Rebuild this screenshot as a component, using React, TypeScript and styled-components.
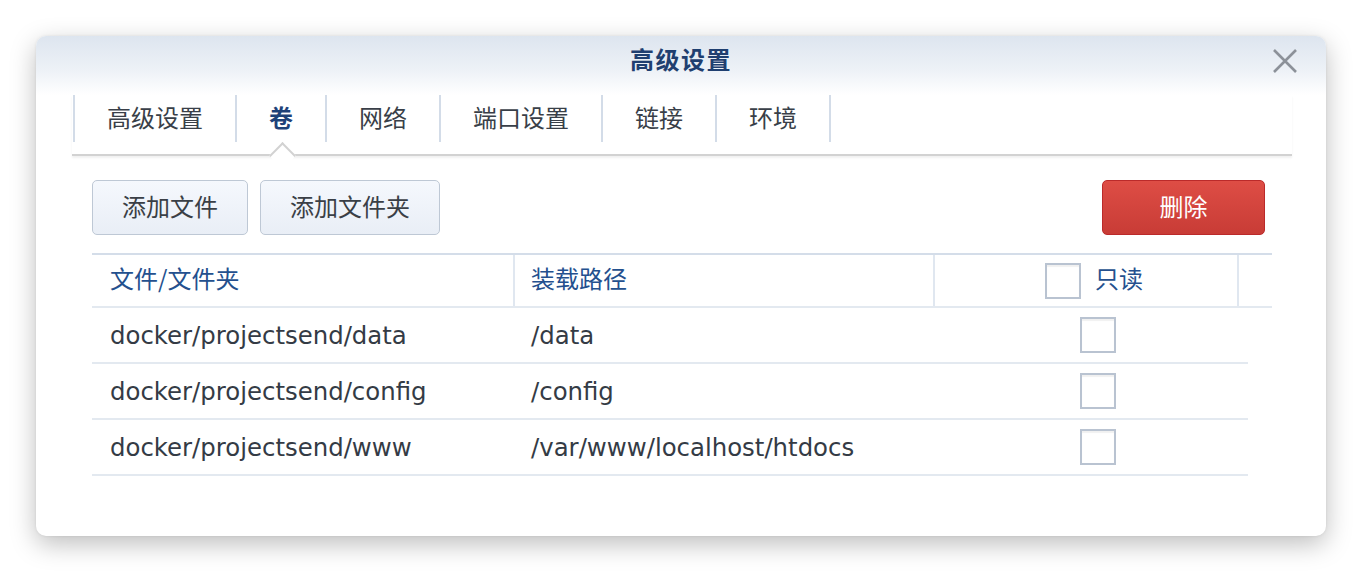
import React from "react";
import styled, { createGlobalStyle } from "styled-components";

const Global = createGlobalStyle`
  html, body { margin: 0; padding: 0; background: #ffffff; }
  body { font-family: "DejaVu Sans", "Noto Sans CJK SC", sans-serif; }
  * { box-sizing: border-box; }
`;

const CJK = `"Noto Sans CJK SC", "Noto Sans", sans-serif`;
const LATIN = `"DejaVu Sans", "Noto Sans CJK SC", sans-serif`;

const Page = styled.div`
  padding: 36px;
  width: 1362px;
  height: 572px;
`;

const Window = styled.div`
  width: 1290px;
  height: 500px;
  background: #ffffff;
  border-radius: 10px;
  box-shadow: 0 8px 26px rgba(0, 0, 0, 0.26), 0 0 3px rgba(0, 0, 0, 0.08);
  overflow: hidden;
  display: flex;
  flex-direction: column;
`;

const Header = styled.div`
  position: relative;
  height: 59px;
  flex: none;
  background: linear-gradient(to bottom, #dde5ef 0%, #eef2f7 60%, #ffffff 100%);
  display: flex;
  justify-content: center;
  padding-top: 8px;
`;

const Title = styled.div`
  font-family: ${CJK};
  font-size: 24px;
  line-height: 30px;
  font-weight: 700;
  letter-spacing: 1.5px;
  color: #1f3f70;
`;

const Close = styled.button`
  position: absolute;
  top: 13px;
  right: 29px;
  width: 24px;
  height: 24px;
  padding: 0;
  border: none;
  background: transparent;
  display: flex;
`;

const TabBar = styled.div`
  margin: 0 34px 0 36px;
  padding: 0 0 12px 1px;
  border-bottom: 2px solid #d2d2d2;
  box-shadow: 0 2px 2px rgba(0, 0, 0, 0.06);
  display: flex;
  flex: none;
`;

const Tab = styled.div<{ $active?: boolean; $last?: boolean }>`
  position: relative;
  height: 47px;
  padding: 0 32px 5px;
  border-left: 2px solid #d3dce8;
  border-right: ${(p) => (p.$last ? "2px solid #d3dce8" : "none")};
  display: flex;
  align-items: center;
  font-family: ${CJK};
  font-size: 24px;
  font-weight: ${(p) => (p.$active ? 700 : 400)};
  color: ${(p) => (p.$active ? "#1e4178" : "#393f48")};

  &::after {
    content: "";
    display: ${(p) => (p.$active ? "block" : "none")};
    position: absolute;
    left: 50%;
    top: calc(100% + 3.5px);
    width: 17px;
    height: 17px;
    margin-left: -8.5px;
    background: #ffffff;
    border-top: 2px solid #d2d2d2;
    border-left: 2px solid #d2d2d2;
    transform: rotate(45deg);
  }
`;

const Content = styled.div`
  padding: 24px 54px 0 56px;
  display: flex;
  flex-direction: column;
`;

const Toolbar = styled.div`
  display: flex;
  gap: 12px;
  align-items: center;
`;

const Button = styled.button<{ $danger?: boolean }>`
  height: 55px;
  padding: 0 29px 3px;
  border-radius: 5px;
  font-family: ${CJK};
  font-size: 24px;
  line-height: 1;
  cursor: pointer;
  border: 1px solid ${(p) => (p.$danger ? "#bb2a2a" : "#bec8d5")};
  background: ${(p) =>
    p.$danger
      ? "linear-gradient(to bottom, #de4d45, #c83c36)"
      : "linear-gradient(to bottom, #f5f8fd, #e9eef6)"};
  color: ${(p) => (p.$danger ? "#ffffff" : "#3a3f46")};
  min-width: ${(p) => (p.$danger ? "163px" : "0")};
  margin-left: ${(p) => (p.$danger ? "auto" : "0")};
  margin-right: ${(p) => (p.$danger ? "7px" : "0")};
`;

const Table = styled.div`
  margin-top: 18px;
  display: flex;
  flex-direction: column;
`;

const HeadRow = styled.div`
  display: grid;
  grid-template-columns: 423px 420px 304px 1fr;
  height: 55px;
  border-top: 2px solid #d4dde9;
  border-bottom: 2px solid #e3e9f0;
`;

const HeadCell = styled.div<{ $center?: boolean; $pad?: number }>`
  display: flex;
  align-items: center;
  justify-content: ${(p) => (p.$center ? "center" : "flex-start")};
  gap: 14px;
  padding-left: ${(p) => p.$pad ?? 18}px;
  border-right: 2px solid #e0e7f0;
  font-family: ${LATIN};
  font-size: 24px;
  color: #24508e;
  &:last-child { border-right: none; }
`;

const HeadLabel = styled.span`
  font-family: ${CJK};
  position: relative;
  top: -3px;
`;

const Row = styled.div`
  display: grid;
  grid-template-columns: 423px 420px 1fr;
  width: 1156px;
  height: 56px;
  border-bottom: 2px solid #e3e9f0;
`;

const Cell = styled.div<{ $center?: boolean; $pad?: number }>`
  display: flex;
  align-items: center;
  justify-content: ${(p) => (p.$center ? "center" : "flex-start")};
  padding-left: ${(p) => p.$pad ?? 18}px;
  font-family: ${LATIN};
  font-size: 24.4px;
  color: #343b45;
  white-space: nowrap;
`;

const Check = styled.span`
  display: inline-block;
  width: 36px;
  height: 36px;
  border: 2px solid #b9c3d1;
  background: #ffffff;
  box-shadow: inset 0 2px 1px rgba(0, 0, 0, 0.06);
  flex: none;
`;

const tabs = ["高级设置", "卷", "网络", "端口设置", "链接", "环境"];
const rows = [
  ["docker/projectsend/data", "/data"],
  ["docker/projectsend/config", "/config"],
  ["docker/projectsend/www", "/var/www/localhost/htdocs"],
];

export default function App() {
  return (
    <Page>
      <Global />
      <Window>
        <Header>
          <Title>高级设置</Title>
          <Close aria-label="close">
            <svg width="24" height="24" viewBox="0 0 24 24">
              <path d="M1 1 L23 23 M23 1 L1 23" stroke="#8c9199" strokeWidth="2.6" fill="none" />
            </svg>
          </Close>
        </Header>
        <TabBar>
          {tabs.map((t, i) => (
            <Tab key={t} $active={i === 1} $last={i === tabs.length - 1}>
              {t}
            </Tab>
          ))}
        </TabBar>
        <Content>
          <Toolbar>
            <Button>添加文件</Button>
            <Button>添加文件夹</Button>
            <Button $danger>删除</Button>
          </Toolbar>
          <Table>
            <HeadRow>
              <HeadCell>
                <HeadLabel>文件/文件夹</HeadLabel>
              </HeadCell>
              <HeadCell $pad={16}>
                <HeadLabel>装载路径</HeadLabel>
              </HeadCell>
              <HeadCell $center $pad={16}>
                <Check />
                <HeadLabel>只读</HeadLabel>
              </HeadCell>
              <HeadCell />
            </HeadRow>
            {rows.map(([a, b]) => (
              <Row key={a}>
                <Cell>{a}</Cell>
                <Cell $pad={16}>{b}</Cell>
                <Cell $center $pad={12}>
                  <Check />
                </Cell>
              </Row>
            ))}
          </Table>
        </Content>
      </Window>
    </Page>
  );
}
